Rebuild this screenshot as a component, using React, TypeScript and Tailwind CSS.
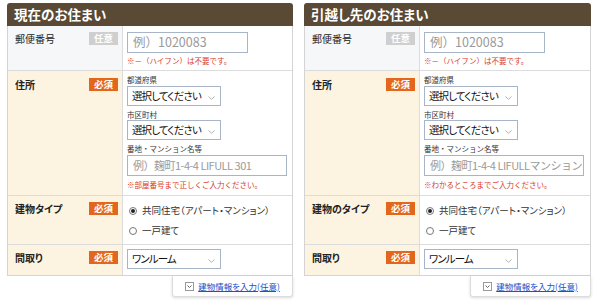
import React from "react";

function Badge({ req }: { req: boolean }) {
  return (
    <span
      className={`flex h-[13px] w-[29px] items-center justify-center text-[9.5px] font-bold leading-none text-white ${
        req ? "bg-[#e2661c]" : "bg-[#cfcfcf]"
      }`}
    >
      {req ? "必須" : "任意"}
    </span>
  );
}

function Chevron() {
  return (
    <svg width="7" height="4" viewBox="0 0 7 4" className="absolute right-[5px] top-[9px]">
      <path d="M0.5 0.5 L3.5 3.3 L6.5 0.5" fill="none" stroke="#a8a8a8" strokeWidth="0.9" />
    </svg>
  );
}

function Select({ value, w }: { value: string; w: string }) {
  return (
    <div
      className={`relative flex h-[20px] items-center whitespace-nowrap border border-[#a7b5c6] bg-white pl-[4px] text-[10.5px] leading-none tracking-[-0.9px] text-[#111] [font-feature-settings:'palt'] ${w}`}
    >
      {value}
      <Chevron />
    </div>
  );
}

function Input({ ph, w, size }: { ph: string; w: string; size: string }) {
  return (
    <div
      className={`flex h-[21px] items-center overflow-hidden whitespace-nowrap border border-[#a7b5c6] bg-white pl-[5px] leading-none text-[#9a9a9a] ${size} ${w}`}
    >
      {ph}
    </div>
  );
}

function Row({
  label,
  req,
  bold,
  cream,
  children,
  last,
  labelPt,
}: {
  label: string;
  req: boolean;
  bold: boolean;
  cream: boolean;
  children: React.ReactNode;
  last?: boolean;
  labelPt: string;
}) {
  return (
    <div className={`flex ${last ? "" : "border-b border-[#dcdcdc]"}`}>
      <div
        className={`flex w-[115px] shrink-0 items-start justify-between border-r border-[#dcdcdc] pl-[7px] pr-[4px] ${labelPt} ${
          cream ? "bg-[#fcf3e1]" : "bg-[#f6f7f9]"
        }`}
      >
        <span
          className={`text-[10px] leading-[13px] text-[#222] [font-feature-settings:'palt'] ${
            bold ? "font-bold" : ""
          }`}
        >
          {label}
        </span>
        <Badge req={req} />
      </div>
      <div className="flex-1 bg-white pl-[4px]">{children}</div>
    </div>
  );
}

function Radio({ checked, label }: { checked: boolean; label: string }) {
  return (
    <div className="flex h-[20px] items-center gap-[5px] pl-[1px]">
      <span className="flex h-[8px] w-[8px] items-center justify-center rounded-full border border-[#777] bg-white">
        {checked && <span className="h-[4px] w-[4px] rounded-full bg-[#222]" />}
      </span>
      <span className="text-[9.5px] leading-none text-[#333] [font-feature-settings:'palt']">{label}</span>
    </div>
  );
}

function Small({ children, cls }: { children: React.ReactNode; cls: string }) {
  return <div className={`text-[7.5px] text-[#333] ${cls}`}>{children}</div>;
}

function Note({ children, cls }: { children: React.ReactNode; cls: string }) {
  return <div className={`text-[7.5px] leading-[10px] text-[#d93a2b] ${cls}`}>{children}</div>;
}

function Panel({
  title,
  typeLabel,
  addrPh,
  addrNote,
  width,
}: {
  title: string;
  typeLabel: string;
  addrPh: string;
  addrNote: string;
  width: string;
}) {
  return (
    <div className={`${width} shrink-0`}>
      <div className="flex h-[23px] items-center rounded-t-[3px] bg-[#5a4935] pl-[7px] text-[13.5px] font-bold text-white [font-feature-settings:'palt']">
        {title}
      </div>
      <div className="border-x border-b border-[#d4d4d4]">
        <Row label="郵便番号" req={false} bold={false} cream={false} labelPt="pt-[6px]">
          <div className="h-[44px] pt-[6px]">
            <Input ph="例）1020083" w="w-[121px]" size="text-[12.5px]" />
            <Note cls="mt-[3px]">※－（ハイフン）は不要です。</Note>
          </div>
        </Row>
        <Row label="住所" req bold cream labelPt="pt-[7px]">
          <div className="h-[124px] pt-[3px]">
            <Small cls="leading-[12px]">都道府県</Small>
            <Select value="選択してください" w="w-[94px]" />
            <Small cls="mt-[3px] leading-[11px]">市区町村</Small>
            <Select value="選択してください" w="w-[94px]" />
            <Small cls="mt-[3px] leading-[12px]">番地・マンション名等</Small>
            <Input ph={addrPh} w="w-[160px]" size="text-[11px] tracking-[-0.5px]" />
            <Note cls="mt-[4px]">{addrNote}</Note>
          </div>
        </Row>
        <Row label={typeLabel} req bold cream labelPt="pt-[6px]">
          <div className="h-[48px] pl-[1px] pt-[5px]">
            <Radio checked label="共同住宅（アパート・マンション）" />
            <Radio checked={false} label="一戸建て" />
          </div>
        </Row>
        <Row label="間取り" req bold cream last labelPt="pt-[6px]">
          <div className="h-[30px] pt-[4px]">
            <Select value="ワンルーム" w="w-[94px]" />
          </div>
        </Row>
      </div>
      <div className="flex justify-end">
        <div className="flex h-[21px] w-[121px] items-center justify-center gap-[4px] rounded-b-[3px] border-x border-b border-[#dcdcdc] bg-white shadow-[0_1px_3px_rgba(0,0,0,0.15)]">
          <svg width="9" height="9" viewBox="0 0 9 9">
            <rect x="0.5" y="0.5" width="8" height="8" fill="white" stroke="#999" />
            <path d="M2.5 3.5 L4.5 5.5 L6.5 3.5" fill="none" stroke="#666" strokeWidth="1" />
          </svg>
          <span className="text-[8.5px] leading-none text-[#2250c8] underline [font-feature-settings:'palt']">
            建物情報を入力(任意)
          </span>
        </div>
      </div>
    </div>
  );
}

export default function App() {
  return (
    <div className="h-[301px] w-[600px] bg-white pl-[7px] pt-[3px] font-['Noto_Sans_CJK_JP','Noto_Sans',sans-serif]">
      <div className="flex gap-[11px]">
        <Panel
          title="現在のお住まい"
          typeLabel="建物タイプ"
          addrPh="例）麹町1-4-4 LIFULL 301"
          addrNote="※部屋番号まで正しくご入力ください。"
          width="w-[286px]"
        />
        <Panel
          title="引越し先のお住まい"
          typeLabel="建物のタイプ"
          addrPh="例）麹町1-4-4 LIFULLマンション"
          addrNote="※わかるところまでご入力ください。"
          width="w-[287px]"
        />
      </div>
    </div>
  );
}
